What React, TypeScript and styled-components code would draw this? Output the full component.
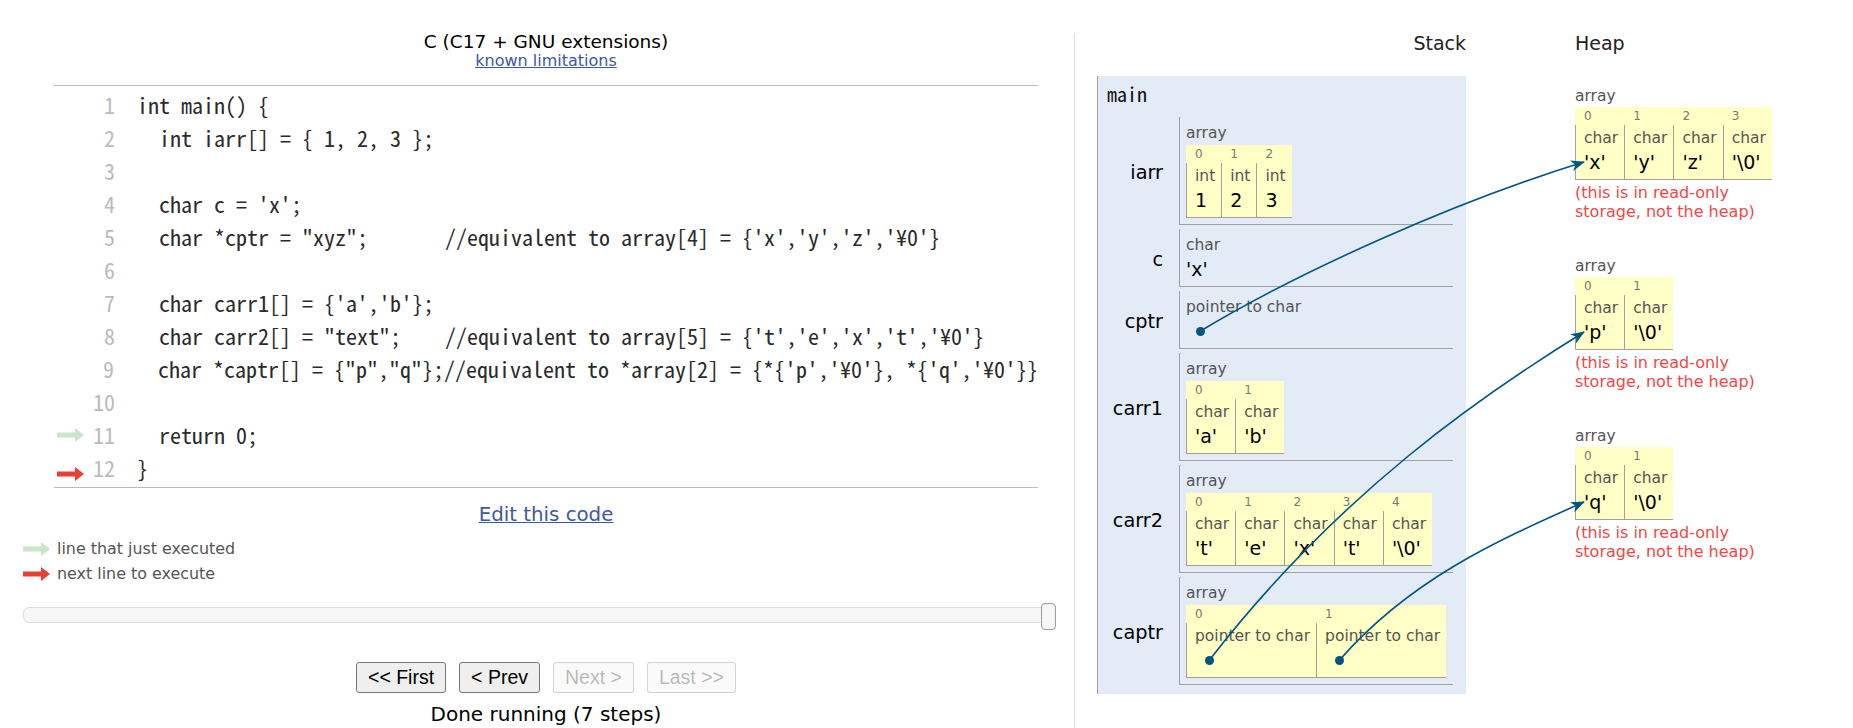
import * as React from 'react';
import styled, { createGlobalStyle } from 'styled-components';

const MONO = `'Noto Sans Mono CJK JP', 'Liberation Mono', monospace`;
const LINK = '#3d58a2';
const PTR = '#005583';
const GREEN = '#c9e6ca';
const RED = '#e93f34';

const GlobalStyle = createGlobalStyle`
    html, body {
        margin: 0;
        padding: 0;
        background: #ffffff;
    }
    body {
        font-family: 'DejaVu Sans', Verdana, sans-serif;
        color: #000000;
    }
`;

const Page = styled.div`
    position: relative;
    display: flex;
    align-items: flex-start;
    width: 1853px;
    height: 728px;
    padding-top: 33px;
    box-sizing: border-box;
    overflow: hidden;
`;

/* ---------- left side: code + controls ---------- */

const LeftPane = styled.div`
    width: 1074px;
    height: 695px;
    border-right: 1px solid #dddddd;
    display: flex;
    flex-direction: column;
`;

const Centered = styled.div`
    margin-left: 54px;
    width: 984px;
    display: flex;
    flex-direction: column;
    align-items: center;
`;

const LangTitle = styled.div`
    font-size: 18.5px;
    line-height: 17px;
    color: #000;
`;

const Link = styled.a<{ size: number }>`
    font-size: ${(p) => p.size}px;
    color: ${LINK};
    text-decoration: underline;
    cursor: pointer;
`;

const LimitsLine = styled.div`
    line-height: 22px;
`;

const CodeBox = styled.div`
    margin-top: 13px;
    align-self: stretch;
    border-top: 1px solid #bbbbbb;
    border-bottom: 1px solid #bbbbbb;
    padding: 2px 0 3px 0;
`;

const CodeRow = styled.div`
    display: flex;
    align-items: center;
    height: 33px;
`;

const Gutter = styled.div<{ shift: number }>`
    width: 36px;
    height: 33px;
    display: flex;
    align-items: center;
    padding-left: 3px;
    box-sizing: border-box;
    svg {
        transform: translateY(${(p) => p.shift}px);
    }
`;

const LineNo = styled.div`
    width: 25px;
    text-align: right;
    font-family: ${MONO};
    font-size: 22px;
    line-height: 33px;
    color: #bbbbbb;
`;

const CodeText = styled.div`
    padding-left: 22px;
    font-family: ${MONO};
    font-size: 22px;
    line-height: 33px;
    white-space: pre;
    color: #2a2a2a;
`;

const EditLine = styled.div`
    margin-top: 15px;
    line-height: 24px;
`;

const Legend = styled.div`
    margin: 8px 0 0 23px;
    display: flex;
    flex-direction: column;
`;

const LegendRow = styled.div`
    display: flex;
    align-items: center;
    gap: 7px;
    height: 25px;
    font-size: 15.9px;
    color: #555555;
`;

const Slider = styled.div`
    position: relative;
    margin: 21px 0 0 23px;
    width: 1032px;
    height: 16px;
    box-sizing: border-box;
    background: #f6f6f6;
    border: 1px solid #dddddd;
    border-radius: 6px;
`;

const Handle = styled.div`
    position: absolute;
    right: -2px;
    top: -5px;
    width: 15px;
    height: 27px;
    box-sizing: border-box;
    background: #f6f6f6;
    border: 1px solid #9a9a9a;
    border-radius: 4px;
`;

const Controls = styled.div`
    margin-top: 39px;
    display: flex;
    justify-content: center;
    gap: 13px;
`;

const NavButton = styled.button`
    height: 31px;
    padding: 0 11px;
    font-family: 'Liberation Sans', Arial, sans-serif;
    font-size: 19.5px;
    color: #000000;
    background: #efefef;
    border: 1px solid #767676;
    border-radius: 3px;
    &:disabled {
        color: rgba(16, 16, 16, 0.3);
        background: rgba(239, 239, 239, 0.3);
        border-color: rgba(118, 118, 118, 0.3);
    }
`;

const DoneText = styled.div`
    margin-top: 10px;
    font-size: 20px;
    line-height: 22px;
`;

/* ---------- right side: stack + heap ---------- */

const RightPane = styled.div`
    display: flex;
    padding-left: 22px;
`;

const StackColumn = styled.div`
    width: 369px;
    display: flex;
    flex-direction: column;
`;

const HeapColumn = styled.div`
    margin-left: 109px;
    display: flex;
    flex-direction: column;
`;

const PaneHeader = styled.div<{ align: string }>`
    font-size: 19px;
    line-height: 20px;
    color: #222222;
    text-align: ${(p) => p.align};
`;

const Frame = styled.div`
    margin-top: 23px;
    background: #e2ebf6;
    border-left: 1px solid #a0a0a0;
    padding: 8px 13px 9px 0;
`;

const FrameName = styled.div`
    padding-left: 9px;
    font-family: ${MONO};
    font-size: 20px;
    line-height: 20px;
    color: #111;
`;

const VarGrid = styled.div`
    margin-top: 13px;
    display: grid;
    grid-template-columns: 81px 1fr;
    row-gap: 4px;
`;

const VarName = styled.div`
    align-self: center;
    text-align: right;
    padding: 3px 16px 0 0;
    font-size: 19.3px;
`;

const VarValue = styled.div`
    border-left: 1px solid #a0a0a0;
    border-bottom: 1px solid #a0a0a0;
    padding: 7px 0 0 6px;
`;

const Prim = styled.div`
    padding-bottom: 4px;
`;

const ObjLabel = styled.div`
    font-size: 15.5px;
    line-height: 18px;
    color: #555555;
`;

const ArrayWrap = styled.div<{ bottom: number }>`
    padding-bottom: ${(p) => p.bottom}px;
    table {
        margin-top: 3px;
    }
`;

const ArrTable = styled.table`
    border-collapse: separate;
    border-spacing: 0;
    background: #ffffc6;
`;

const IndexTd = styled.td`
    height: 18px;
    padding: 0 0 0 9px;
    font-size: 12px;
    line-height: 18px;
    color: #777777;
    vertical-align: middle;
`;

const ElemTd = styled.td`
    border-left: 1px solid #a0a0a0;
    border-bottom: 1px solid #a0a0a0;
    padding: 4px 6px 4px 8px;
    vertical-align: top;
`;

const TypeLabel = styled.div`
    font-size: 15.5px;
    line-height: 18px;
    color: #555555;
    white-space: nowrap;
`;

const ValueLine = styled.div`
    margin-top: 2px;
    height: 26px;
    display: flex;
    align-items: center;
    font-size: 19px;
    color: #000;
    white-space: nowrap;
`;

const Dot = styled.span`
    display: inline-block;
    width: 9px;
    height: 9px;
    margin-left: 10px;
    border-radius: 50%;
    background: ${PTR};
`;

const HeapList = styled.div`
    margin-top: 34px;
    display: flex;
    flex-direction: column;
    gap: 36px;
`;

const HeapItem = styled.div`
    table {
        margin-top: 2px;
    }
`;

const ReadOnlyNote = styled.div`
    margin-top: 3px;
    font-size: 16px;
    line-height: 19px;
    color: #f04848;
`;

const Overlay = styled.svg`
    position: absolute;
    left: 0;
    top: 0;
    width: 100%;
    height: 100%;
    pointer-events: none;
    overflow: visible;
`;

/* ---------- data ---------- */

const codeLines = [
    'int main() {',
    '  int iarr[] = { 1, 2, 3 };',
    '',
    "  char c = 'x';",
    '  char *cptr = "xyz";       //equivalent to array[4] = {\'x\',\'y\',\'z\',\'¥0\'}',
    '',
    "  char carr1[] = {'a','b'};",
    '  char carr2[] = "text";    //equivalent to array[5] = {\'t\',\'e\',\'x\',\'t\',\'¥0\'}',
    '  char *captr[] = {"p","q"};//equivalent to *array[2] = {*{\'p\',\'¥0\'}, *{\'q\',\'¥0\'}}',
    '',
    '  return 0;',
    '}',
];

type Elem = { type: string; value?: string; ptr?: string };
type StackVar =
    | { name: string; kind: 'prim'; elem: Elem }
    | { name: string; kind: 'array'; elems: Elem[] };

const chars = (s: string[]): Elem[] => s.map((v) => ({ type: 'char', value: v }));

const stackVars: StackVar[] = [
    { name: 'iarr', kind: 'array', elems: ['1', '2', '3'].map((v) => ({ type: 'int', value: v })) },
    { name: 'c', kind: 'prim', elem: { type: 'char', value: "'x'" } },
    { name: 'cptr', kind: 'prim', elem: { type: 'pointer to char', ptr: 'cptr' } },
    { name: 'carr1', kind: 'array', elems: chars(["'a'", "'b'"]) },
    { name: 'carr2', kind: 'array', elems: chars(["'t'", "'e'", "'x'", "'t'", "'\\0'"]) },
    {
        name: 'captr',
        kind: 'array',
        elems: [
            { type: 'pointer to char', ptr: 'captr0' },
            { type: 'pointer to char', ptr: 'captr1' },
        ],
    },
];

const heapArrays: { id: string; elems: Elem[] }[] = [
    { id: 'h0', elems: chars(["'x'", "'y'", "'z'", "'\\0'"]) },
    { id: 'h1', elems: chars(["'p'", "'\\0'"]) },
    { id: 'h2', elems: chars(["'q'", "'\\0'"]) },
];

// control point offsets picked to follow the original connector curves
const links = [
    { from: 'cptr', to: 'h0', c1: [100, -60], c2: [-130, 40] },
    { from: 'captr0', to: 'h1', c1: [130, -168], c2: [-100, 62] },
    { from: 'captr1', to: 'h2', c1: [70, -80], c2: [-90, 40] },
];

/* ---------- pieces ---------- */

const LineArrow: React.FC<{ color: string }> = ({ color }) => (
    <svg width="27" height="14" viewBox="0 0 27 14">
        <path d="M0 4.5 H18 V0 L27 7 L18 14 V9.5 H0 Z" fill={color} />
    </svg>
);

type Reg = (id: string) => (el: HTMLElement | null) => void;

const ElemCell: React.FC<{ elem: Elem; reg: Reg; valueId?: string }> = ({ elem, reg, valueId }) => (
    <>
        <TypeLabel>{elem.type}</TypeLabel>
        <ValueLine ref={valueId ? reg(valueId) : undefined}>
            {elem.ptr ? <Dot ref={reg(elem.ptr)} /> : elem.value}
        </ValueLine>
    </>
);

const ArrayTable: React.FC<{ elems: Elem[]; reg: Reg; targetId?: string }> = ({ elems, reg, targetId }) => (
    <ArrTable>
        <tbody>
            <tr>
                {elems.map((_, i) => (
                    <IndexTd key={i}>{i}</IndexTd>
                ))}
            </tr>
            <tr>
                {elems.map((e, i) => (
                    <ElemTd key={i}>
                        <ElemCell elem={e} reg={reg} valueId={i === 0 ? targetId : undefined} />
                    </ElemTd>
                ))}
            </tr>
        </tbody>
    </ArrTable>
);

export default function App() {
    const pageRef = React.useRef<HTMLDivElement | null>(null);
    const nodes = React.useRef<Record<string, HTMLElement | null>>({});
    const [paths, setPaths] = React.useState<string[]>([]);

    const reg: Reg = (id) => (el) => {
        nodes.current[id] = el;
    };

    React.useLayoutEffect(() => {
        const compute = () => {
            const page = pageRef.current;
            if (!page) return;
            const base = page.getBoundingClientRect();
            const out: string[] = [];
            links.forEach((l) => {
                const a = nodes.current[l.from];
                const b = nodes.current[l.to];
                if (!a || !b) return;
                const ra = a.getBoundingClientRect();
                const rb = b.getBoundingClientRect();
                const x0 = ra.left + ra.width / 2 - base.left;
                const y0 = ra.top + ra.height / 2 - base.top;
                const x3 = rb.left - base.left;
                const y3 = rb.top + rb.height / 2 - base.top;
                out.push(
                    `M${x0} ${y0} C${x0 + l.c1[0]} ${y0 + l.c1[1]}, ${x3 + l.c2[0]} ${y3 + l.c2[1]}, ${x3} ${y3}`,
                );
            });
            setPaths(out);
        };
        compute();
        if (document.fonts) document.fonts.ready.then(compute);
    }, []);

    return (
        <>
            <GlobalStyle />
            <Page ref={pageRef}>
                <LeftPane>
                    <Centered>
                        <LangTitle>C (C17 + GNU extensions)</LangTitle>
                        <LimitsLine>
                            <Link size={16}>known limitations</Link>
                        </LimitsLine>
                        <CodeBox>
                            {codeLines.map((line, i) => (
                                <CodeRow key={i}>
                                    <Gutter shift={i === 11 ? 6 : 0}>
                                        {i === 10 && <LineArrow color={GREEN} />}
                                        {i === 11 && <LineArrow color={RED} />}
                                    </Gutter>
                                    <LineNo>{i + 1}</LineNo>
                                    <CodeText>{line}</CodeText>
                                </CodeRow>
                            ))}
                        </CodeBox>
                        <EditLine>
                            <Link size={19.8}>Edit this code</Link>
                        </EditLine>
                    </Centered>

                    <Legend>
                        <LegendRow>
                            <LineArrow color={GREEN} />
                            line that just executed
                        </LegendRow>
                        <LegendRow>
                            <LineArrow color={RED} />
                            next line to execute
                        </LegendRow>
                    </Legend>

                    <Slider>
                        <Handle />
                    </Slider>

                    <Centered>
                        <Controls>
                            <NavButton>&lt;&lt; First</NavButton>
                            <NavButton>&lt; Prev</NavButton>
                            <NavButton disabled>Next &gt;</NavButton>
                            <NavButton disabled>Last &gt;&gt;</NavButton>
                        </Controls>
                        <DoneText>Done running (7 steps)</DoneText>
                    </Centered>
                </LeftPane>

                <RightPane>
                    <StackColumn>
                        <PaneHeader align="right">Stack</PaneHeader>
                        <Frame>
                            <FrameName>main</FrameName>
                            <VarGrid>
                                {stackVars.map((v) => (
                                    <React.Fragment key={v.name}>
                                        <VarName>{v.name}</VarName>
                                        <VarValue>
                                            {v.kind === 'prim' ? (
                                                <Prim>
                                                    <ElemCell elem={v.elem} reg={reg} />
                                                </Prim>
                                            ) : (
                                                <ArrayWrap bottom={6}>
                                                    <ObjLabel>array</ObjLabel>
                                                    <ArrayTable elems={v.elems} reg={reg} />
                                                </ArrayWrap>
                                            )}
                                        </VarValue>
                                    </React.Fragment>
                                ))}
                            </VarGrid>
                        </Frame>
                    </StackColumn>

                    <HeapColumn>
                        <PaneHeader align="left">Heap</PaneHeader>
                        <HeapList>
                            {heapArrays.map((h) => (
                                <HeapItem key={h.id}>
                                    <ObjLabel>array</ObjLabel>
                                    <ArrayTable elems={h.elems} reg={reg} targetId={h.id} />
                                    <ReadOnlyNote>
                                        (this is in read-only
                                        <br />
                                        storage, not the heap)
                                    </ReadOnlyNote>
                                </HeapItem>
                            ))}
                        </HeapList>
                    </HeapColumn>
                </RightPane>

                <Overlay>
                    <defs>
                        <marker
                            id="ptr-head"
                            markerWidth="14"
                            markerHeight="11"
                            refX="13"
                            refY="5.5"
                            orient="auto"
                            markerUnits="userSpaceOnUse"
                        >
                            <path d="M0,0 L14,5.5 L0,11 L4,5.5 Z" fill={PTR} />
                        </marker>
                    </defs>
                    {paths.map((d, i) => (
                        <path key={i} d={d} fill="none" stroke={PTR} strokeWidth="1.6" markerEnd="url(#ptr-head)" />
                    ))}
                </Overlay>
            </Page>
        </>
    );
}
